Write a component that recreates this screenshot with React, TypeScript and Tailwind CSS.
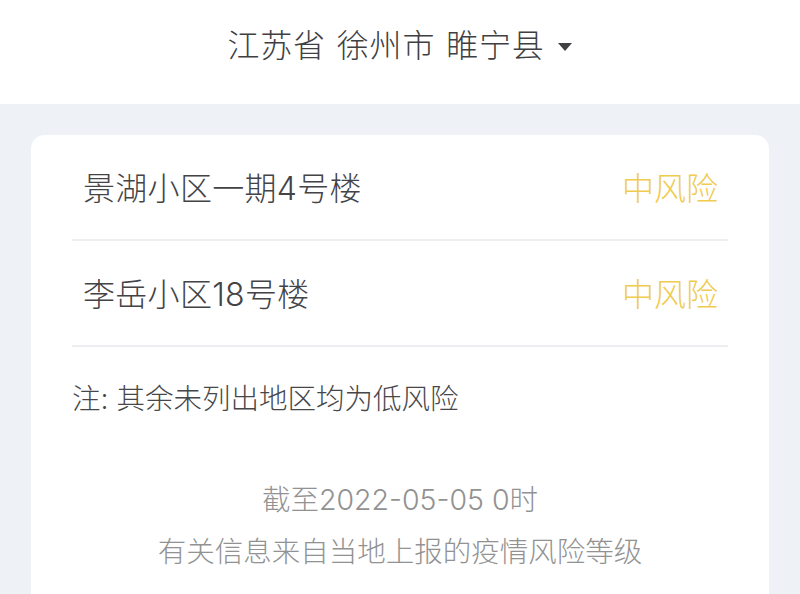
import React from "react";

const font = { fontFamily: 'Inter, "Noto Sans CJK SC", "Noto Sans", sans-serif' };

export default function App() {
  const rows = [
    { name: "景湖小区一期4号楼", level: "中风险" },
    { name: "李岳小区18号楼", level: "中风险" },
  ];
  return (
    <div className="w-[800px] h-[594px] overflow-hidden bg-[#eef1f5] font-light" style={font}>
      <div className="h-[104px] bg-white flex items-center justify-center pb-[12px]">
        <div className="flex items-center text-[32px] text-[#404043] tracking-[0.8px] gap-[11px]">
          <span>江苏省</span>
          <span>徐州市</span>
          <span>睢宁县</span>
          <svg width="16" height="10" viewBox="0 0 16 10" className="ml-[1px] mt-[2px]">
            <path d="M1 1 L15 1 L8 9 Z" fill="#404043" />
          </svg>
        </div>
      </div>
      <div className="mx-[31px] mt-[31px] bg-white rounded-[14px] px-[41px] h-[480px]">
        {rows.map((r) => (
          <div
            key={r.name}
            className="h-[106px] flex items-center justify-between pl-[11px] pr-[10px] pt-[3px] border-b-2 border-[#eceef1]"
          >
            <span className="text-[32px] text-[#444447] tracking-[0.3px]">{r.name}</span>
            <span className="text-[32px] text-[#efcb50]">{r.level}</span>
          </div>
        ))}
        <div className="pt-[32px] text-[28.5px] text-[#47474a] leading-[40px]">注: 其余未列出地区均为低风险</div>
        <div className="mt-[55px] flex flex-col items-center text-[28.5px] text-[#929292] leading-[52px]">
          <span>截至2022-05-05 0时</span>
          <span>有关信息来自当地上报的疫情风险等级</span>
        </div>
      </div>
    </div>
  );
}
